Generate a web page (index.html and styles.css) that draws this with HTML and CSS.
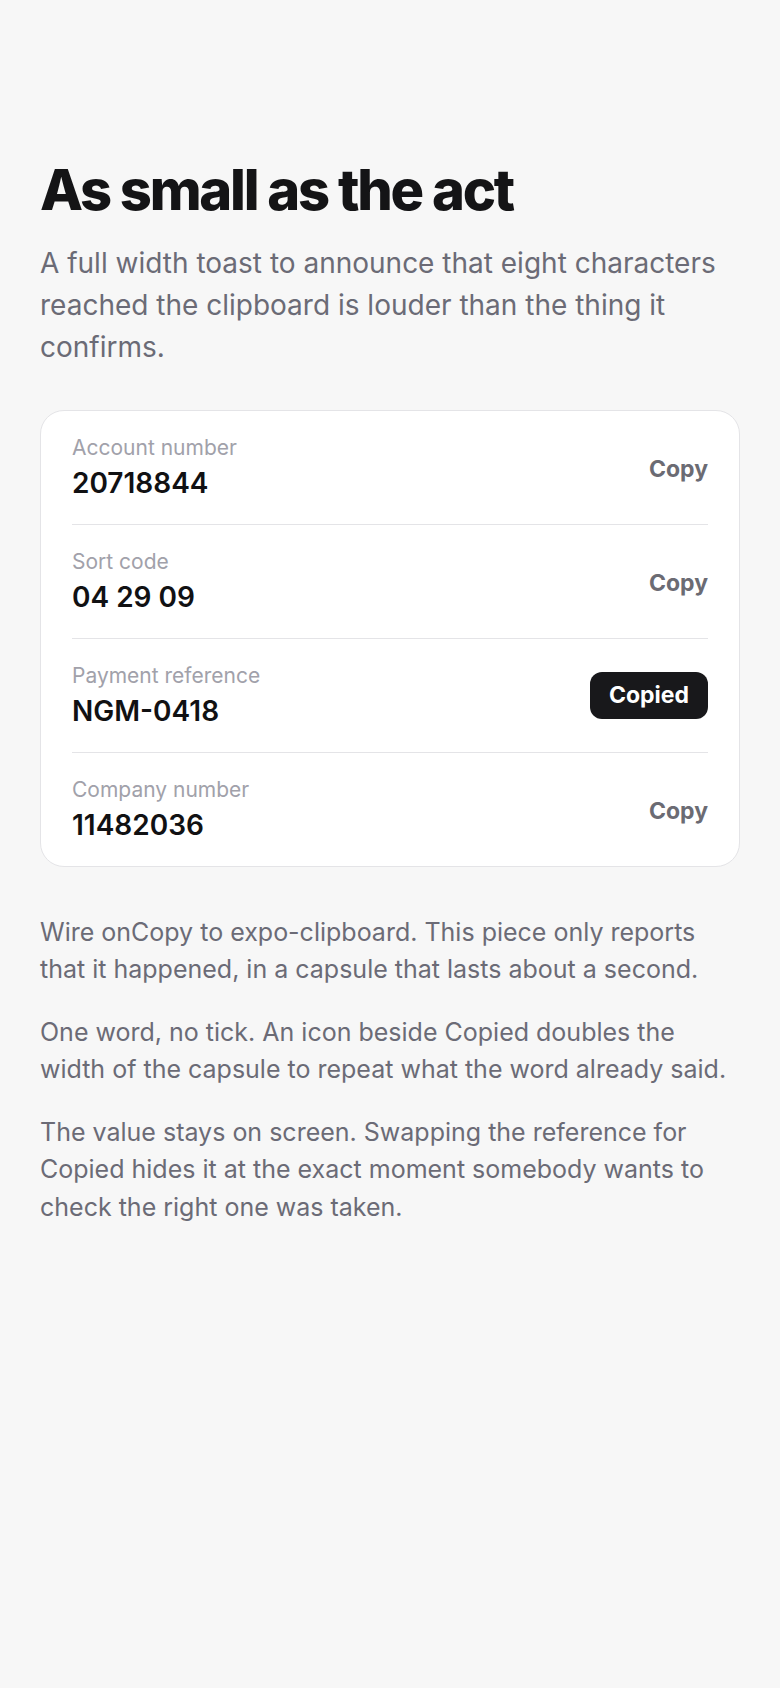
FILE: index.html
```html
<!DOCTYPE html>
<html lang="en">
<head>
    <meta charset="UTF-8">
    <meta name="viewport" content="width=device-width, initial-scale=1.0">
    <title>As small as the act</title>
    <link rel="stylesheet" href="styles.css">
</head>
<body>
    <main class="page">
        <h1 class="title">As small as the act</h1>
        <p class="lead">A full width toast to announce that eight characters reached the clipboard is louder than the thing it confirms.</p>

        <section class="card">
            <div class="row">
                <div class="field">
                    <span class="label">Account number</span>
                    <span class="value">20718844</span>
                </div>
                <button type="button" class="copy-btn">Copy</button>
            </div>
            <div class="row">
                <div class="field">
                    <span class="label">Sort code</span>
                    <span class="value">04 29 09</span>
                </div>
                <button type="button" class="copy-btn">Copy</button>
            </div>
            <div class="row">
                <div class="field">
                    <span class="label">Payment reference</span>
                    <span class="value">NGM-0418</span>
                </div>
                <button type="button" class="copy-btn copied">Copied</button>
            </div>
            <div class="row">
                <div class="field">
                    <span class="label">Company number</span>
                    <span class="value">11482036</span>
                </div>
                <button type="button" class="copy-btn">Copy</button>
            </div>
        </section>

        <div class="notes">
            <p>Wire onCopy to expo-clipboard. This piece only reports that it happened, in a capsule that lasts about a second.</p>
            <p>One word, no tick. An icon beside Copied doubles the width of the capsule to repeat what the word already said.</p>
            <p>The value stays on screen. Swapping the reference for Copied hides it at the exact moment somebody wants to check the right one was taken.</p>
        </div>
    </main>
</body>
</html>
```

FILE: styles.css
```css
body {
    margin: 0;
    font-family: Inter, "Noto Sans", sans-serif;
    background-color: #f7f7f7;
    color: #141416;
}
.page {
    padding: 160px 40px 40px;
}
.title {
    margin: 0;
    font-size: 56px;
    line-height: 1.1;
    font-weight: 800;
    letter-spacing: -0.04em;
    color: #141416;
}
.lead {
    margin: 20px 0 0;
    font-size: 28px;
    line-height: 1.5;
    color: #6b6b76;
}
.card {
    margin-top: 42px;
    background-color: #ffffff;
    border: 1px solid #e4e4e7;
    border-radius: 24px;
    padding: 0 31px;
}
.row {
    display: flex;
    align-items: center;
    justify-content: space-between;
    padding: 23px 0;
    border-bottom: 1px solid #e4e4e7;
}
.row:last-child {
    border-bottom: none;
}
.field {
    display: flex;
    flex-direction: column;
    gap: 3px;
}
.label {
    font-size: 21px;
    line-height: 28px;
    color: #a1a1aa;
}
.value {
    font-size: 28px;
    line-height: 36px;
    font-weight: 600;
    color: #111113;
}
.copy-btn {
    font-family: inherit;
    font-size: 23px;
    font-weight: 700;
    color: #6b6b73;
    background: none;
    border: none;
    padding: 0;
    margin-top: 4px;
    cursor: pointer;
}
.copy-btn.copied {
    background-color: #18181b;
    color: #ffffff;
    padding: 0 19px;
    height: 47px;
    margin-top: 0;
    border-radius: 12px;
}
.notes {
    margin-top: 47px;
}
.notes p {
    margin: 0 0 25px;
    font-size: 25px;
    line-height: 1.5;
    color: #6b6b76;
}
```
